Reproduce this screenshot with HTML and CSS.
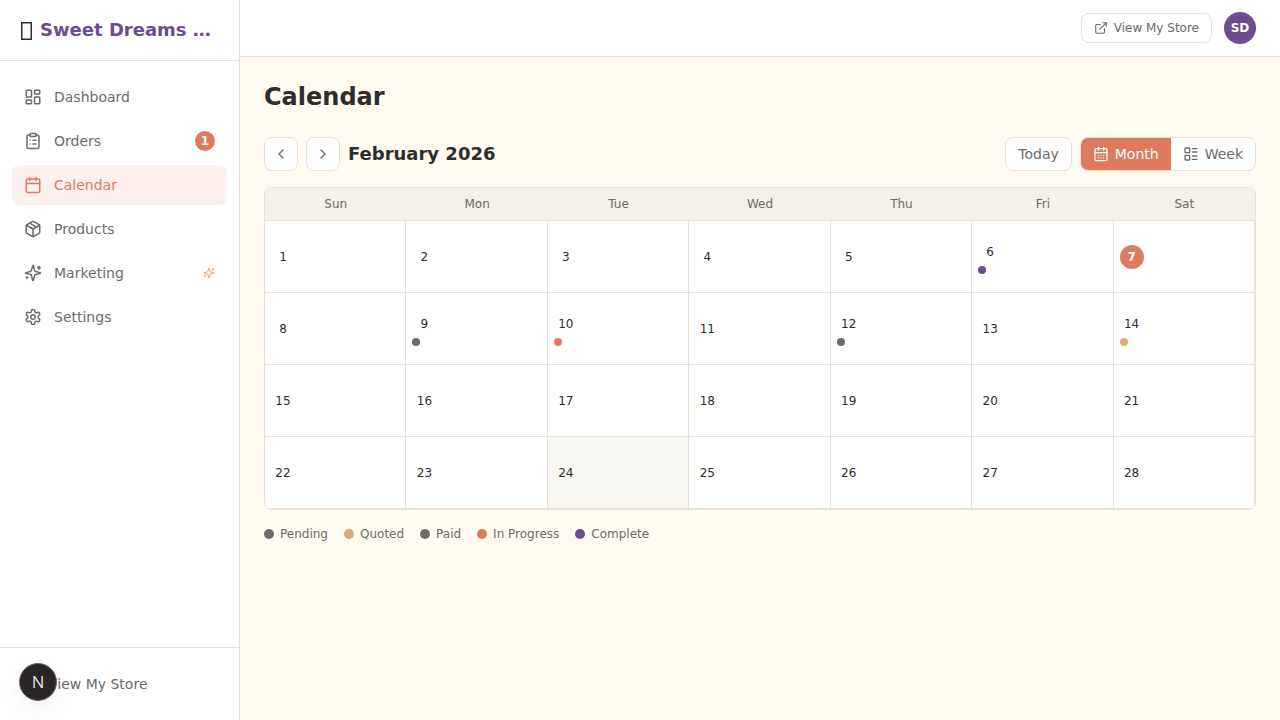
FILE: index.html
```html
<!DOCTYPE html>
<html lang="en">
<head>
  <meta charset="UTF-8">
  <title>Calendar - Sweet Dreams Bakery</title>
  <link rel="stylesheet" href="styles.css">
</head>
<body>
  <svg class="icon-defs" width="0" height="0">
    <symbol id="i-dashboard" viewBox="0 0 24 24"><rect x="3" y="3" width="7" height="9" rx="1"/><rect x="14" y="3" width="7" height="5" rx="1"/><rect x="14" y="12" width="7" height="9" rx="1"/><rect x="3" y="16" width="7" height="5" rx="1"/></symbol>
    <symbol id="i-orders" viewBox="0 0 24 24"><rect x="8" y="2" width="8" height="4" rx="1"/><path d="M16 4h2a2 2 0 0 1 2 2v14a2 2 0 0 1-2 2H6a2 2 0 0 1-2-2V6a2 2 0 0 1 2-2h2"/><path d="M12 11h4"/><path d="M12 16h4"/><path d="M8 11h.01"/><path d="M8 16h.01"/></symbol>
    <symbol id="i-calendar" viewBox="0 0 24 24"><path d="M8 2v4"/><path d="M16 2v4"/><rect x="3" y="4" width="18" height="18" rx="2"/><path d="M3 10h18"/></symbol>
    <symbol id="i-calendar-days" viewBox="0 0 24 24"><path d="M8 2v4"/><path d="M16 2v4"/><rect x="3" y="4" width="18" height="18" rx="2"/><path d="M3 10h18"/><path d="M8 14h.01"/><path d="M12 14h.01"/><path d="M16 14h.01"/><path d="M8 18h.01"/><path d="M12 18h.01"/><path d="M16 18h.01"/></symbol>
    <symbol id="i-package" viewBox="0 0 24 24"><path d="M11 21.73a2 2 0 0 0 2 0l7-4A2 2 0 0 0 21 16V8a2 2 0 0 0-1-1.73l-7-4a2 2 0 0 0-2 0l-7 4A2 2 0 0 0 3 8v8a2 2 0 0 0 1 1.73z"/><path d="M12 22V12"/><path d="M3.29 7 12 12l8.71-5"/><path d="m7.5 4.27 9 5.15"/></symbol>
    <symbol id="i-sparkles" viewBox="0 0 24 24"><path d="M9.937 15.5A2 2 0 0 0 8.5 14.063l-6.135-1.582a.5.5 0 0 1 0-.962L8.5 9.936A2 2 0 0 0 9.937 8.5l1.582-6.135a.5.5 0 0 1 .963 0L14.063 8.5A2 2 0 0 0 15.5 9.937l6.135 1.581a.5.5 0 0 1 0 .964L15.5 14.063a2 2 0 0 0-1.437 1.437l-1.582 6.135a.5.5 0 0 1-.963 0z"/><path d="M20 3v4"/><path d="M22 5h-4"/><path d="M4 17v2"/><path d="M5 18H3"/></symbol>
    <symbol id="i-settings" viewBox="0 0 24 24"><path d="M12.22 2h-.44a2 2 0 0 0-2 2v.18a2 2 0 0 1-1 1.73l-.43.25a2 2 0 0 1-2 0l-.15-.08a2 2 0 0 0-2.73.73l-.22.38a2 2 0 0 0 .73 2.73l.15.1a2 2 0 0 1 1 1.72v.51a2 2 0 0 1-1 1.74l-.15.09a2 2 0 0 0-.73 2.73l.22.38a2 2 0 0 0 2.73.73l.15-.08a2 2 0 0 1 2 0l.43.25a2 2 0 0 1 1 1.73V20a2 2 0 0 0 2 2h.44a2 2 0 0 0 2-2v-.18a2 2 0 0 1 1-1.73l.43-.25a2 2 0 0 1 2 0l.15.08a2 2 0 0 0 2.73-.73l.22-.39a2 2 0 0 0-.73-2.73l-.15-.08a2 2 0 0 1-1-1.74v-.5a2 2 0 0 1 1-1.74l.15-.09a2 2 0 0 0 .73-2.73l-.22-.38a2 2 0 0 0-2.73-.73l-.15.08a2 2 0 0 1-2 0l-.43-.25a2 2 0 0 1-1-1.73V4a2 2 0 0 0-2-2z"/><circle cx="12" cy="12" r="3"/></symbol>
    <symbol id="i-external" viewBox="0 0 24 24"><path d="M15 3h6v6"/><path d="M10 14 21 3"/><path d="M18 13v6a2 2 0 0 1-2 2H5a2 2 0 0 1-2-2V8a2 2 0 0 1 2-2h6"/></symbol>
    <symbol id="i-left" viewBox="0 0 24 24"><path d="m15 18-6-6 6-6"/></symbol>
    <symbol id="i-right" viewBox="0 0 24 24"><path d="m9 18 6-6-6-6"/></symbol>
    <symbol id="i-list" viewBox="0 0 24 24"><rect x="3" y="3" width="7" height="7" rx="1"/><rect x="3" y="14" width="7" height="7" rx="1"/><path d="M14 4h7"/><path d="M14 9h7"/><path d="M14 15h7"/><path d="M14 20h7"/></symbol>
  </svg>

  <div class="app">
    <aside class="sidebar">
      <div class="brand">
        <!-- the logo emoji has no glyph in the reference, it shows as an empty box -->
        <svg class="brand-box" viewBox="0 0 11 18"><rect x="0.75" y="0.75" width="9.5" height="16.5"/></svg>
        <span class="brand-name">Sweet Dreams Bakery</span>
      </div>

      <nav class="side-nav">
        <a class="nav-item" href="#"><svg class="icon"><use href="#i-dashboard"/></svg><span class="nav-label">Dashboard</span></a>
        <a class="nav-item" href="#"><svg class="icon"><use href="#i-orders"/></svg><span class="nav-label">Orders</span><span class="nav-badge">1</span></a>
        <a class="nav-item active" href="#"><svg class="icon"><use href="#i-calendar"/></svg><span class="nav-label">Calendar</span></a>
        <a class="nav-item" href="#"><svg class="icon"><use href="#i-package"/></svg><span class="nav-label">Products</span></a>
        <a class="nav-item" href="#"><svg class="icon"><use href="#i-sparkles"/></svg><span class="nav-label">Marketing</span><svg class="nav-spark"><use href="#i-sparkles"/></svg></a>
        <a class="nav-item" href="#"><svg class="icon"><use href="#i-settings"/></svg><span class="nav-label">Settings</span></a>
      </nav>

      <div class="side-footer">
        <a class="nav-item footer-link" href="#"><svg class="icon-sm"><use href="#i-external"/></svg><span class="nav-label">View My Store</span></a>
      </div>
    </aside>

    <div class="content">
      <header class="topbar">
        <a class="store-link" href="#"><svg class="icon-sm"><use href="#i-external"/></svg>View My Store</a>
        <span class="avatar">SD</span>
      </header>

      <main class="page">
        <h1>Calendar</h1>

        <div class="toolbar">
          <button class="btn-square"><svg class="icon-btn"><use href="#i-left"/></svg></button>
          <button class="btn-square"><svg class="icon-btn"><use href="#i-right"/></svg></button>
          <h2>February 2026</h2>
          <button class="btn-today">Today</button>
          <div class="view-switch">
            <button class="view-btn selected"><svg class="icon-btn"><use href="#i-calendar-days"/></svg>Month</button>
            <button class="view-btn"><svg class="icon-btn"><use href="#i-list"/></svg>Week</button>
          </div>
        </div>

        <div class="calendar">
          <div class="weekdays">
            <div>Sun</div><div>Mon</div><div>Tue</div><div>Wed</div><div>Thu</div><div>Fri</div><div>Sat</div>
          </div>
          <div class="days">
            <div class="day"><span class="num">1</span></div>
            <div class="day"><span class="num">2</span></div>
            <div class="day"><span class="num">3</span></div>
            <div class="day"><span class="num">4</span></div>
            <div class="day"><span class="num">5</span></div>
            <div class="day"><span class="num">6</span><span class="dot complete"></span></div>
            <div class="day"><span class="num today">7</span></div>

            <div class="day"><span class="num">8</span></div>
            <div class="day"><span class="num">9</span><span class="dot paid"></span></div>
            <div class="day"><span class="num">10</span><span class="dot progress"></span></div>
            <div class="day"><span class="num">11</span></div>
            <div class="day"><span class="num">12</span><span class="dot paid"></span></div>
            <div class="day"><span class="num">13</span></div>
            <div class="day"><span class="num">14</span><span class="dot quoted"></span></div>

            <div class="day"><span class="num">15</span></div>
            <div class="day"><span class="num">16</span></div>
            <div class="day"><span class="num">17</span></div>
            <div class="day"><span class="num">18</span></div>
            <div class="day"><span class="num">19</span></div>
            <div class="day"><span class="num">20</span></div>
            <div class="day"><span class="num">21</span></div>

            <div class="day"><span class="num">22</span></div>
            <div class="day"><span class="num">23</span></div>
            <div class="day shaded"><span class="num">24</span></div>
            <div class="day"><span class="num">25</span></div>
            <div class="day"><span class="num">26</span></div>
            <div class="day"><span class="num">27</span></div>
            <div class="day"><span class="num">28</span></div>
          </div>
        </div>

        <div class="legend">
          <span class="legend-item"><span class="dot pending"></span>Pending</span>
          <span class="legend-item"><span class="dot quoted"></span>Quoted</span>
          <span class="legend-item"><span class="dot paid"></span>Paid</span>
          <span class="legend-item"><span class="dot progress"></span>In Progress</span>
          <span class="legend-item"><span class="dot complete"></span>Complete</span>
        </div>
      </main>
    </div>
  </div>

  <!-- dev indicator -->
  <div class="dev-badge"><span>N</span></div>
</body>
</html>
```

FILE: styles.css
```css
* {
  margin: 0;
  padding: 0;
  box-sizing: border-box;
}

body {
  font-family: "DejaVu Sans", sans-serif;
  background-color: #fffbf0;
  color: #2d2d2d;
  overflow: hidden;
}

a {
  text-decoration: none;
  color: inherit;
}

button {
  font-family: inherit;
  cursor: pointer;
}

.icon-defs {
  position: absolute;
}

svg {
  fill: none;
  stroke: currentColor;
  stroke-width: 2;
  stroke-linecap: round;
  stroke-linejoin: round;
}

.app {
  display: flex;
  height: 720px;
}

/* Sidebar */
.sidebar {
  width: 240px;
  flex-shrink: 0;
  display: flex;
  flex-direction: column;
  background-color: #fff;
  border-right: 1px solid #e8e0d5;
}

.brand {
  height: 61px;
  display: flex;
  align-items: center;
  gap: 8px;
  padding: 0 20px;
  border-bottom: 1px solid #e8e0d5;
  font-size: 18px;
  font-weight: 700;
}

.brand-box {
  width: 11px;
  height: 18px;
  margin: 2px 0 0 1px;
  flex-shrink: 0;
  stroke-width: 1.5;
  stroke-linecap: butt;
  stroke-linejoin: miter;
}

.brand-name {
  color: #6b4c93;
  line-height: 22px;
  overflow: hidden;
  white-space: nowrap;
  text-overflow: ellipsis;
}

.side-nav {
  flex: 1;
  display: flex;
  flex-direction: column;
  gap: 4px;
  padding: 16px 12px;
}

.nav-item {
  height: 40px;
  display: flex;
  align-items: center;
  gap: 12px;
  padding: 0 12px;
  border-radius: 8px;
  font-size: 14px;
  color: #6b6b6b;
}

.nav-item.active {
  background-color: #fcf0ed;
  color: #e07a5f;
}

.footer-link {
  gap: 10px;
}

.nav-label {
  flex: 1;
}

.icon {
  width: 18px;
  height: 18px;
  flex-shrink: 0;
}

.nav-badge {
  width: 20px;
  height: 20px;
  border-radius: 50%;
  display: flex;
  align-items: center;
  justify-content: center;
  background-color: #e07a5f;
  color: #fff;
  font-size: 12px;
  font-weight: 700;
}

.nav-spark {
  width: 12px;
  height: 12px;
  color: #e0a96d;
}

.side-footer {
  padding: 16px 12px;
  border-top: 1px solid #e8e0d5;
}

/* Main column */
.content {
  flex: 1;
  display: flex;
  flex-direction: column;
  min-width: 0;
}

.topbar {
  height: 57px;
  display: flex;
  align-items: center;
  justify-content: flex-end;
  gap: 12px;
  padding: 0 24px;
  background-color: #fff;
  border-bottom: 1px solid #e8e0d5;
}

.store-link {
  height: 30px;
  display: flex;
  align-items: center;
  gap: 6px;
  padding: 0 12px;
  border: 1px solid #e8e0d5;
  border-radius: 8px;
  font-size: 12px;
  color: #6b6b6b;
}

.icon-sm {
  width: 14px;
  height: 14px;
  flex-shrink: 0;
}

.avatar {
  width: 32px;
  height: 32px;
  border-radius: 50%;
  display: flex;
  align-items: center;
  justify-content: center;
  background-color: #6b4c93;
  color: #fff;
  font-size: 12px;
  font-weight: 700;
}

.page {
  flex: 1;
  padding: 24px;
}

h1 {
  font-size: 24px;
  line-height: 30px;
  font-weight: 700;
  padding-top: 1px;
  margin-bottom: 25px;
}

.toolbar {
  display: flex;
  align-items: center;
  gap: 8px;
  margin-bottom: 16px;
}

.toolbar h2 {
  flex: 1;
  font-size: 18px;
  line-height: 20px;
  font-weight: 700;
}

.btn-square,
.btn-today {
  height: 34px;
  display: flex;
  align-items: center;
  justify-content: center;
  background-color: #fff;
  border: 1px solid #e8e0d5;
  border-radius: 8px;
  color: #6b6b6b;
}

.btn-square {
  width: 34px;
}

.btn-today {
  padding: 0 12px;
  font-size: 14px;
}

.icon-btn {
  width: 16px;
  height: 16px;
}

.view-switch {
  display: flex;
  height: 34px;
  background-color: #fff;
  border: 1px solid #e8e0d5;
  border-radius: 8px;
  overflow: hidden;
}

.view-btn {
  display: flex;
  align-items: center;
  gap: 6px;
  padding: 0 12px;
  background: none;
  border: none;
  font-size: 14px;
  color: #6b6b6b;
}

.view-btn.selected {
  background-color: #e07a5f;
  color: #fff;
}

/* Calendar grid */
.calendar {
  background-color: #fff;
  border: 1px solid #e8e0d5;
  border-radius: 8px;
  overflow: hidden;
}

.weekdays {
  display: grid;
  grid-template-columns: repeat(7, 1fr);
  height: 33px;
  background-color: #f5f0e8;
  border-bottom: 1px solid #e8e0d5;
}

.weekdays div {
  display: flex;
  align-items: center;
  justify-content: center;
  font-size: 12px;
  color: #6b6b6b;
}

.days {
  display: grid;
  grid-template-columns: repeat(7, 1fr);
  grid-auto-rows: 72px;
}

.day {
  display: flex;
  flex-direction: column;
  justify-content: center;
  gap: 2px;
  padding: 0 6px;
  border-right: 1px solid #e8e0d5;
  border-bottom: 1px solid #e8e0d5;
}

.day.shaded {
  background-color: #f9f7f2;
}

.num {
  width: 24px;
  height: 24px;
  border-radius: 50%;
  display: flex;
  align-items: center;
  justify-content: center;
  font-size: 12px;
}

.num.today {
  background-color: #e07a5f;
  color: #fff;
  font-weight: 700;
}

.dot {
  width: 8px;
  height: 8px;
  border-radius: 50%;
  flex-shrink: 0;
}

.legend .dot {
  width: 10px;
  height: 10px;
}

.pending,
.paid {
  background-color: #6b6b6b;
}

.quoted {
  background-color: #e0a96d;
}

.progress {
  background-color: #e07a5f;
}

.complete {
  background-color: #6b4c93;
}

.legend {
  display: flex;
  gap: 16px;
  margin-top: 17px;
}

.legend-item {
  display: flex;
  align-items: center;
  gap: 6px;
  font-size: 12px;
  color: #6b6b6b;
}

/* Floating dev badge */
.dev-badge {
  position: absolute;
  left: 19px;
  top: 663px;
  width: 38px;
  height: 38px;
  border-radius: 50%;
  display: flex;
  align-items: center;
  justify-content: center;
  background-color: #2a2627;
  border: 1px solid #6e6466;
  box-shadow: 0 8px 24px rgba(0, 0, 0, 0.06);
  color: #fff;
  font-family: "Inter", sans-serif;
  font-size: 16px;
  font-weight: 300;
}
```
